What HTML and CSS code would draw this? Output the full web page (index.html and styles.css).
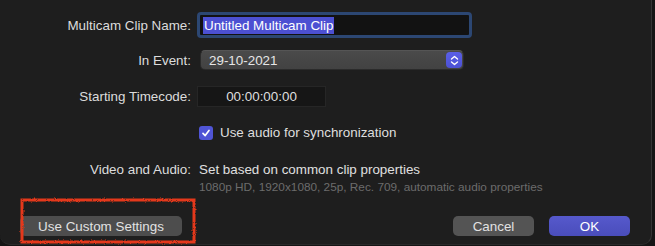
FILE: index.html
```html
<!DOCTYPE html>
<html lang="en">
<head>
    <meta charset="UTF-8">
    <meta name="viewport" content="width=device-width, initial-scale=1.0">
    <title>New Multicam Clip</title>
    <link rel="stylesheet" href="styles.css">
</head>
<body>
    <div class="dialog">
        <div class="form">
            <label class="label">Multicam Clip Name:</label>
            <div class="text-field">
                <span class="selected">Untitled Multicam Clip</span>
            </div>

            <label class="label row-event">In Event:</label>
            <div class="popup row-event">
                <span>29-10-2021</span>
                <span class="stepper">
                    <svg width="9" height="11" viewBox="0 0 9 11">
                        <path d="M1.5 4 L4.5 1.5 L7.5 4 M1.5 7 L4.5 9.5 L7.5 7" fill="none" stroke="white" stroke-width="1.4" stroke-linecap="round" stroke-linejoin="round"/>
                    </svg>
                </span>
            </div>

            <label class="label row-tc">Starting Timecode:</label>
            <div class="timecode row-tc">00:00:00:00</div>

            <div class="row-check"></div>
            <div class="check-line row-check">
                <span class="checkbox">
                    <svg width="10" height="10" viewBox="0 0 10 10">
                        <path d="M2 5.3 L4.2 7.6 L8 2.4" fill="none" stroke="white" stroke-width="1.7" stroke-linecap="round" stroke-linejoin="round"/>
                    </svg>
                </span>
                <span>Use audio for synchronization</span>
            </div>

            <label class="label row-va">Video and Audio:</label>
            <div class="va row-va">
                <div class="va-main">Set based on common clip properties</div>
                <div class="va-sub">1080p HD, 1920x1080, 25p, Rec. 709, automatic audio properties</div>
            </div>
        </div>

        <div class="footer">
            <button class="btn">Use Custom Settings</button>
            <div class="footer-right">
                <button class="btn">Cancel</button>
                <button class="btn primary">OK</button>
            </div>
        </div>

        <svg class="markup" width="178" height="48" viewBox="0 0 178 48">
            <filter id="rough">
                <feTurbulence type="fractalNoise" baseFrequency="0.9" numOctaves="2" seed="3"/>
                <feDisplacementMap in="SourceGraphic" scale="2.5"/>
            </filter>
            <rect x="3" y="3" width="172" height="42" fill="none" stroke="#e4391b" stroke-width="3" filter="url(#rough)"/>
        </svg>
    </div>
</body>
</html>
```

FILE: styles.css
```css
body {
    margin: 0;
    background-color: #151515;
    font-family: "Liberation Sans", Arial, sans-serif;
    font-size: 13.4px;
    color: #dedede;
    overflow: hidden;
}

.dialog {
    position: relative;
    width: 651px;
    height: 244px;
    background-color: #1e1e1e;
    border-right: 1px solid #343434;
    border-bottom: 1px solid #2a2a2a;
    border-radius: 0 0 10px 10px;
}

.form {
    display: grid;
    grid-template-columns: 191px 1fr;
    column-gap: 6px;
    align-items: center;
    padding-top: 12px;
}

.label {
    text-align: right;
    color: #dcdcdc;
    line-height: 15px;
}

.row-event {
    margin-top: 12px;
}

.row-tc {
    margin-top: 16px;
}

.row-check {
    margin-top: 18px;
}

.row-va {
    align-self: start;
    margin-top: 22px;
}

.text-field {
    width: 266px;
    height: 20px;
    border: 3px solid #2c4773;
    border-radius: 4px;
    background-color: #121212;
    display: flex;
    align-items: center;
    padding-left: 3px;
}

.selected {
    background-color: #4c50d2;
    color: #fff;
    padding: 1px 1px;
    line-height: 15px;
}

.popup {
    margin-left: 3px;
    width: 264px;
    height: 20px;
    box-sizing: border-box;
    border: 1px solid #2b2b2b;
    border-top-color: #555;
    border-radius: 5px;
    background: linear-gradient(#4a4a4a, #424242);
    display: flex;
    align-items: center;
    justify-content: space-between;
    padding: 0 1px 0 8px;
    color: #e6e6e6;
}

.stepper {
    width: 16px;
    height: 16px;
    border-radius: 4px;
    background: linear-gradient(#5a5fe6, #4c51d4);
    display: flex;
    align-items: center;
    justify-content: center;
}

.timecode {
    width: 129px;
    height: 21px;
    box-sizing: border-box;
    border: 1px solid #262626;
    background-color: #161616;
    text-align: center;
    line-height: 20px;
    color: #dedede;
}

.check-line {
    margin-left: 2px;
    display: flex;
    align-items: center;
    gap: 7px;
    line-height: 15px;
}

.checkbox {
    width: 14px;
    height: 14px;
    border-radius: 3px;
    background-color: #5055d6;
    display: flex;
    align-items: center;
    justify-content: center;
}

.va {
    margin-left: 2px;
}

.va-main {
    color: #e0e0e0;
    line-height: 15px;
}

.va-sub {
    margin-top: 3px;
    font-size: 11.8px;
    line-height: 14px;
    color: #6c6c6c;
}

.footer {
    display: flex;
    justify-content: space-between;
    padding: 0 21px 0 20px;
    margin-top: 22px;
}

.footer-right {
    display: flex;
    gap: 15px;
}

.btn {
    font-family: inherit;
    font-size: 13.4px;
    color: #e2e2e2;
    height: 20px;
    border: none;
    border-radius: 5px;
    background-color: #545454;
    padding: 0;
    width: 81px;
}

.footer > .btn {
    width: 162px;
    background-color: #4d4d4d;
}

.primary {
    background: linear-gradient(#5659cc, #4a4dbb);
    color: #fff;
}

.markup {
    position: absolute;
    left: 19px;
    top: 197px;
}
```
